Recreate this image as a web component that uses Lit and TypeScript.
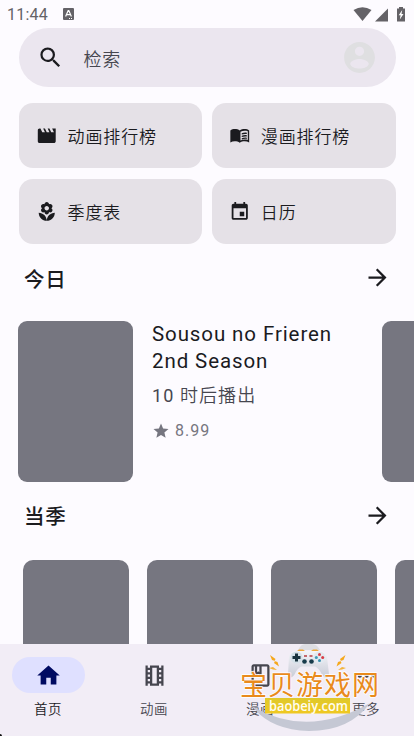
import { LitElement, html, svg, css } from "lit";
import { customElement, property } from "lit/decorators.js";

const ICONS: Record<string, string> = {
  search: "M15.5 14h-.79l-.28-.27A6.471 6.471 0 0 0 16 9.500A6.500 6.500 0 1 0 9.500 16c1.610 0 3.090-.59 4.230-1.570l.27.28v.79l5 4.990L20.490 19l-4.990-5zm-6 0C7.010 14 5 11.990 5 9.500S7.010 5 9.500 5 14 7.010 14 9.500 11.990 14 9.500 14z",
  account: "M12 2C6.480 2 2 6.480 2 12s4.480 10 10 10 10-4.480 10-10S17.520 2 12 2zm0 3a3 3 0 1 1 0 6 3 3 0 0 1 0-6zM12 19.200c-2.500 0-6-1.200-6-3.200 0-2 4-3.100 6-3.100s6 1.100 6 3.100c0 2-3.500 3.200-6 3.200z",
  movie: "M18 4l2 4h-3l-2-4h-2l2 4h-3l-2-4H8l2 4H7L5 4H4c-1.100 0-1.990.9-1.990 2L2 18c0 1.100.9 2 2 2h16c1.100 0 2-.9 2-2V4h-4z",
  book: "M17.500 4.500c-1.950 0-4.050.4-5.500 1.500-1.450-1.100-3.550-1.500-5.500-1.500S2.950 4.900 1.500 6v13.500c1.500-.8 3.100-1.300 5-1.300s4 .5 5.500 1.600c1.500-1.100 3.600-1.600 5.500-1.600s3.500.5 5 1.300V6c-1.450-1.100-3.050-1.500-5-1.500zM21 16.700c-1.100-.35-2.300-.5-3.500-.5-1.500 0-3.300.4-4.700 1.100V7.600c1.400-.7 3.200-1.100 4.700-1.100 1.200 0 2.400.15 3.500.5v9.700zM14.200 9.200c1.700-.7 3.800-.9 5.700-.6v1.500c-1.900-.3-4-.1-5.700.6zm0 2.800c1.700-.7 3.800-.9 5.700-.6v1.500c-1.900-.3-4-.1-5.700.6zm0 2.700c1.700-.7 3.800-.9 5.700-.6v1.500c-1.900-.3-4-.1-5.700.6z",
  flower: "M12 22c0-4.970 4.030-9 9-9 0 4.970-4.030 9-9 9zM5.600 10.250c0 1.380 1.120 2.500 2.500 2.500.53 0 1.010-.16 1.420-.44l-.02.19c0 1.380 1.120 2.500 2.500 2.500s2.500-1.120 2.500-2.500l-.02-.19c.4.28.89.44 1.420.44 1.380 0 2.500-1.120 2.500-2.500 0-1-.59-1.850-1.430-2.250.84-.4 1.430-1.250 1.430-2.250 0-1.380-1.120-2.500-2.500-2.500-.53 0-1.010.16-1.420.44l.02-.19C14.500 2.120 13.380 1 12 1S9.500 2.120 9.500 3.500l.02.19c-.4-.28-.89-.44-1.420-.44-1.380 0-2.500 1.120-2.500 2.500 0 1 .59 1.850 1.430 2.250-.84.4-1.430 1.250-1.430 2.250zM12 5.500c1.380 0 2.500 1.120 2.500 2.500s-1.120 2.500-2.500 2.500S9.500 9.380 9.500 8s1.120-2.500 2.500-2.500zM3 13c0 4.970 4.030 9 9 9 0-4.970-4.030-9-9-9z",
  calendar: "M17 12h-5v5h5v-5zM16 1v2H8V1H6v2H5c-1.110 0-1.990.9-1.990 2L3 19c0 1.100.89 2 2 2h14c1.100 0 2-.9 2-2V5c0-1.100-.9-2-2-2h-1V1h-2zm3 18H5V8h14v11z",
  arrow: "M12 4l-1.410 1.410L16.170 11H4v2h12.170l-5.580 5.590L12 20l8-8z",
  star: "M12 17.270L18.180 21l-1.640-7.030L22 9.240l-7.190-.61L12 2 9.190 8.630 2 9.240l5.460 4.730L5.820 21z",
  home: "M10 20v-6h4v6h5v-8h3L12 3 2 12h3v8z",
  film: "M18 3v2h-2V3H8v2H6V3H4v18h2v-2h2v2h8v-2h2v2h2V3h-2zM8 17H6v-2h2v2zm0-4H6v-2h2v2zm0-4H6V7h2v2zm6 10h-4V5h4v14zm4-2h-2v-2h2v2zm0-4h-2v-2h2v2zm0-4h-2V7h2v2z",
  comic: "M18 2H6c-1.100 0-2 .9-2 2v16c0 1.100.9 2 2 2h12c1.100 0 2-.9 2-2V4c0-1.100-.9-2-2-2zM9 4h2v5l-1-.75L9 9V4zm9 16H6V4h1v9l3-2.250L13 13V4h5v16z",
  more: "M6 10a2 2 0 1 0 0 4 2 2 0 0 0 0-4zm12 0a2 2 0 1 0 0 4 2 2 0 0 0 0-4zm-6 0a2 2 0 1 0 0 4 2 2 0 0 0 0-4z",
};

@customElement("ui-icon")
export class UiIcon extends LitElement {
  @property() name = "";
  static styles = css`
    :host { display: block; flex: none; width: 27px; height: 27px; }
    svg { display: block; width: 100%; height: 100%; fill: currentColor; }
  `;
  render() {
    return html`<svg viewBox="0 0 24 24"><path fill-rule="evenodd" d=${ICONS[this.name] ?? ""}></path></svg>`;
  }
}

@customElement("site-badge")
export class SiteBadge extends LitElement {
  static styles = css`
    :host { display: block; width: 144px; height: 96px; }
    svg { display: block; overflow: visible; }
    .name { font: 400 27px "Noto Sans CJK SC", sans-serif; fill: #e98a1c; stroke: #fff; stroke-width: 1.500px; stroke-linejoin: round; paint-order: stroke; }
    .url { font: 600 14.500px "Open Sans", "Noto Sans", sans-serif; fill: #fffdf0; }
  `;
  render() {
    const bolt = svg`<path d="M-4 -6l5.500 4-1 2 3 1 1.500 4.500-5-3.500 1-2-3-1z" fill="#f5a81c"></path>`;
    return html`
      <svg width="144" height="96" viewBox="238 640 144 96">
        <defs>
          <linearGradient id="gold" x2="0" y2="1"><stop stop-color="#dfc92b"></stop><stop offset="1" stop-color="#f0c822"></stop></linearGradient>
          <linearGradient id="pad" x2="0" y2="1"><stop stop-color="#f4f5f9"></stop><stop offset="1" stop-color="#c8cbd6"></stop></linearGradient>
        </defs>
        <path d="M252 706Q307 739 370 703Q350 731 309 731Q270 730 252 706z" fill="#c5c8d4"></path>
        <path d="M305 644h7q5 0 8 6h-22q3-6 7-6z" fill="#dddde3"></path>
        <path d="M297 651l2-1.500h4l2 1.500zM311 651l2-1.500h4l2 1.500z" fill="#efaa3d"></path>
        <path d="M296 651h24q6 0 7 6l2 17q0 4-3 4-3-1-6-7-3-4-5-4.500h-13q-3 .5-6 5-2 5-5 6-3 0-3-3l1-18q1-5.500 7-5.500z" fill="url(#pad)"></path>
        <circle cx="296.500" cy="657.500" r="6" fill="#d4e1e8"></circle>
        <path d="M295 653.500h3v2.500h2.500v3H298v2.500h-3V659h-2.500v-3h2.500z" fill="#19343e"></path>
        <circle cx="319.500" cy="657.500" r="6" fill="#e2e9f0"></circle>
        <circle cx="319.500" cy="654.500" r="1.500" fill="#d83d46"></circle>
        <circle cx="319.500" cy="660.500" r="1.500" fill="#3b8faf"></circle>
        <circle cx="316.300" cy="657.500" r="1.500" fill="#3e9cb8"></circle>
        <circle cx="322.700" cy="657.500" r="1.500" fill="#d83d46"></circle>
        <circle cx="304.500" cy="661.500" r="2.300" fill="#183b4b"></circle>
        <circle cx="311.500" cy="661.500" r="2.300" fill="#183b4b"></circle>
        <path d="M304 656h3M309.500 656h3" stroke="#b83d43" stroke-width="1.300"></path>
        <g transform="translate(274 661)">${bolt}</g>
        <g transform="translate(341.500 661) scale(-1 1)">${bolt}</g>
        <path d="M269 668l4-1 4 3-4-.5zM346 668l-4-1-4 3 4-.5z" fill="#f3b43b"></path>
        <text class="name" x="240" y="694.500" textLength="139">宝贝游戏网</text>
        <path d="M265 698h85v15.500h-85z" fill="url(#gold)"></path>
        <text class="url" x="269" y="710.500" textLength="79" lengthAdjust="spacingAndGlyphs">baobeiy.com</text>
      </svg>`;
  }
}

@customElement("app-root")
export class AppRoot extends LitElement {
  static styles = css`
    * { box-sizing: border-box; }
    :host {
      display: flex; flex-direction: column; position: relative; width: 414px; height: 736px; overflow: hidden;
      background: #fdfbff; color: #1b1b1f; font-family: Roboto, "Noto Sans CJK SC", sans-serif;
    }
    .status { flex: none; height: 28px; padding: 1px 7px 0; display: flex; align-items: center; color: #646267; font-size: 16px; letter-spacing: 0.2px; }
    .status svg { display: block; }
    .key { margin-left: 15px; margin-top: -2px; }
    .signals { margin-left: auto; margin-top: -2px; }
    .search { flex: none; height: 59px; margin: 0 18.500px; border-radius: 30px; background: #ebe6ef; display: flex; align-items: center; padding: 0 18px; }
    .search .hint { margin-left: 20px; flex: 1; font-size: 18px; font-weight: 350; letter-spacing: 0.8px; color: #46464f; }
    .search .avatar { width: 37px; height: 37px; color: #dfdfe1; }
    .grid { flex: none; display: grid; grid-template-columns: 1fr 1fr; grid-auto-rows: 64.500px; gap: 11.500px 9.500px; margin: 16px 18.500px 0.500px; }
    .tile { display: flex; align-items: center; gap: 10px; padding-left: 17.500px; border-radius: 14px; background: #e5e1e7; font-size: 17px; font-weight: 350; letter-spacing: 0.9px; }
    .tile ui-icon { width: 21.500px; height: 21.500px; }
    .head { flex: none; height: 68px; display: flex; align-items: center; justify-content: space-between; padding: 0 23.500px 1px 24px; font-size: 20.500px; font-weight: 500; letter-spacing: 0.8px; }
    .today { flex: none; height: 161px; margin-top: 8.500px; padding-left: 18px; display: flex; }
    .cover { flex: none; width: 115px; background: #767680; border-radius: 9px; }
    .info { flex: none; width: 230px; margin-right: 19px; padding-left: 19px; }
    .title { font-size: 20.500px; line-height: 27.500px; letter-spacing: 0.9px; }
    .time { font-size: 18px; line-height: 26px; margin-top: 7px; letter-spacing: 1.100px; color: #46464f; font-weight: 350; }
    .digits { font-weight: 400; }
    .score { display: flex; align-items: center; gap: 5px; margin-top: 12px; font-size: 16px; line-height: 20px; letter-spacing: 1px; color: #767680; }
    .score ui-icon { width: 18px; height: 18px; }
    .season { flex: 1; min-height: 0; margin-top: 10.500px; padding-left: 23px; display: flex; gap: 18px; }
    .poster { flex: none; width: 106px; height: 150px; border-radius: 10px; background: #767680; }
    .nav { flex: none; height: 92px; background: #f2edf6; display: flex; padding-top: 13px; }
    .tab { width: 106px; flex: none; display: flex; flex-direction: column; align-items: center; font-size: 13.500px; font-weight: 350; letter-spacing: 0.6px; color: #46464f; }
    .tab:first-child { margin-left: -5px; }
    .pill { width: 73px; height: 36px; border-radius: 18px; display: flex; align-items: center; justify-content: center; }
    .tab.on { color: #1b1b1f; }
    .tab.on .pill { background: #dfe0ff; color: #000b62; }
    .label { line-height: 20px; margin-top: 6px; }
    site-badge { position: absolute; left: 238px; top: 640px; }
    .corner { position: absolute; left: 0; bottom: 0; width: 2px; height: 2px; background: #111; border-radius: 0 2px 0 0; }
  `;

  private tiles = [
    ["movie", "动画排行榜"],
    ["book", "漫画排行榜"],
    ["flower", "季度表"],
    ["calendar", "日历"],
  ];
  private tabs = [
    ["home", "首页"],
    ["film", "动画"],
    ["comic", "漫画"],
    ["more", "更多"],
  ];

  private heading(text: string) {
    return html`<div class="head"><span>${text}</span><ui-icon name="arrow"></ui-icon></div>`;
  }

  render() {
    return html`
      <div class="status">
        <span>11:44</span>
        <svg class="key" width="11" height="12" viewBox="0 0 11 12">
          <rect width="11" height="12" rx="1" fill="#646267"></rect>
          <path d="M2.600 8.500L5.200 2.500h.6l2.600 6M3.700 6.700h3.600M6 10.500h1M8 10.500h1" fill="none" stroke="#fff" stroke-width="1.200"></path>
        </svg>
        <svg class="signals" width="54" height="16" viewBox="354 5 54 16">
          <path d="M354.500 9Q363.500 3.500 372.500 9L363.500 20z" fill="#646267"></path>
          <path d="M389 7.500V20.500H376z" fill="#646267"></path>
          <path d="M398 7.500h2V6h4v1.500h2v13h-8z" fill="#646267"></path>
          <path d="M403.200 9l-3.500 5.200h1.900l-.8 4.300 3.700-5.500h-2z" fill="#fff"></path>
        </svg>
      </div>
      <div class="search">
        <ui-icon name="search"></ui-icon><span class="hint">检索</span><ui-icon class="avatar" name="account"></ui-icon>
      </div>
      <div class="grid">
        ${this.tiles.map(([icon, text]) => html`<div class="tile"><ui-icon name=${icon}></ui-icon><span>${text}</span></div>`)}
      </div>
      ${this.heading("今日")}
      <div class="today">
        <div class="cover"></div>
        <div class="info">
          <div class="title">Sousou no Frieren<br />2nd Season</div>
          <div class="time"><span class="digits">10</span> 时后播出</div>
          <div class="score"><ui-icon name="star"></ui-icon><span>8.99</span></div>
        </div>
        <div class="cover"></div>
      </div>
      ${this.heading("当季")}
      <div class="season">${[0, 1, 2, 3].map(() => html`<div class="poster"></div>`)}</div>
      <div class="nav">
        ${this.tabs.map(([icon, text], i) => html`
          <div class="tab ${i === 0 ? "on" : ""}">
            <div class="pill"><ui-icon name=${icon}></ui-icon></div>
            <span class="label">${text}</span>
          </div>`)}
      </div>
      <site-badge></site-badge>
      <div class="corner"></div>
    `;
  }
}
